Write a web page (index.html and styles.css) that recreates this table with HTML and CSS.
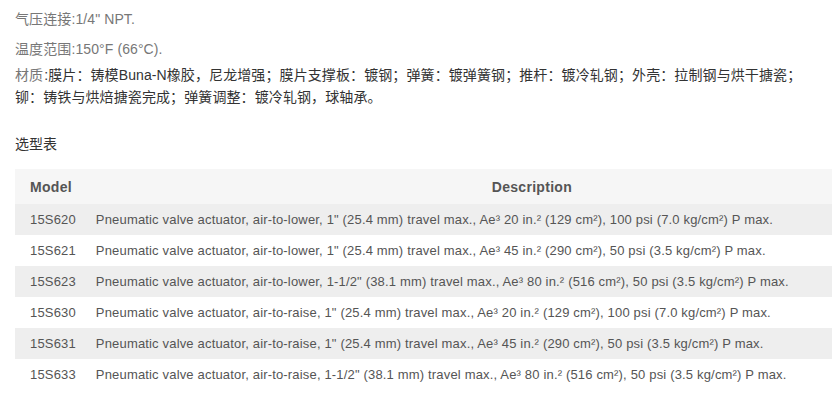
FILE: index.html
```html
<!DOCTYPE html>
<html lang="zh-CN">
<head>
<meta charset="utf-8">
<link rel="stylesheet" href="styles.css">
</head>
<body>
<div class="page">
  <p class="spec spec-first">气压连接:1/4" NPT.</p>
  <p class="spec">温度范围:150°F (66°C).</p>
  <p class="spec spec-material"><span class="label">材质</span><span class="value">:膜片：铸模Buna-N橡胶，尼龙增强；膜片支撑板：镀钢；弹簧：镀弹簧钢；推杆：镀冷轧钢；外壳：拉制钢与烘干搪瓷；铆：铸铁与烘焙搪瓷完成；弹簧调整：镀冷轧钢，球轴承。</span></p>
  <h3 class="section-title">选型表</h3>
  <table class="models">
    <thead>
      <tr><th class="col-model">Model</th><th class="col-desc">Description</th></tr>
    </thead>
    <tbody>
      <tr><td>15S620</td><td>Pneumatic valve actuator, air-to-lower, 1" (25.4 mm) travel max., Ae³ 20 in.² (129 cm²), 100 psi (7.0 kg/cm²) P max.</td></tr>
      <tr><td>15S621</td><td>Pneumatic valve actuator, air-to-lower, 1" (25.4 mm) travel max., Ae³ 45 in.² (290 cm²), 50 psi (3.5 kg/cm²) P max.</td></tr>
      <tr><td>15S623</td><td>Pneumatic valve actuator, air-to-lower, 1-1/2" (38.1 mm) travel max., Ae³ 80 in.² (516 cm²), 50 psi (3.5 kg/cm²) P max.</td></tr>
      <tr><td>15S630</td><td>Pneumatic valve actuator, air-to-raise, 1" (25.4 mm) travel max., Ae³ 20 in.² (129 cm²), 100 psi (7.0 kg/cm²) P max.</td></tr>
      <tr><td>15S631</td><td>Pneumatic valve actuator, air-to-raise, 1" (25.4 mm) travel max., Ae³ 45 in.² (290 cm²), 50 psi (3.5 kg/cm²) P max.</td></tr>
      <tr><td>15S633</td><td>Pneumatic valve actuator, air-to-raise, 1-1/2" (38.1 mm) travel max., Ae³ 80 in.² (516 cm²), 50 psi (3.5 kg/cm²) P max.</td></tr>
    </tbody>
  </table>
</div>
</body>
</html>
```
FILE: styles.css
```css
html, body {
  margin: 0;
  padding: 0;
  background: #ffffff;
}
body {
  font-family: "Liberation Sans", Arial, "Noto Sans CJK SC", sans-serif;
  font-size: 14px;
  color: #333333;
  overflow: hidden;
}
.page {
  padding: 0 0 0 15px;
}
.spec {
  margin: 8px 0 0 0;
  line-height: 22px;
  color: #777777;
  max-width: 790px;
  letter-spacing: 0.1px;
}
.spec-material {
  margin-top: 4px;
}
.spec-material .label {
  margin-right: 1px;
}
.spec-material .value {
  color: #333333;
}
.section-title {
  margin: 25px 0 0 0;
  font-size: 14px;
  font-weight: normal;
  line-height: 22px;
  color: #333333;
}
.models {
  margin-top: 14px;
  width: 817px;
  border-collapse: collapse;
  font-size: 13px;
  color: #555555;
}
.models th {
  height: 35px;
  padding: 0 15px;
  background: #f6f6f6;
  font-weight: bold;
  font-size: 14px;
  letter-spacing: 0.3px;
  color: #555555;
  text-align: left;
}
.models th.col-model {
  width: 45px;
  padding-right: 5px;
}
.models th.col-desc {
  text-align: center;
  padding-left: 166px;
}
.models td {
  height: 31px;
  padding: 0 15px;
  white-space: nowrap;
  letter-spacing: 0.17px;
}
.models td:first-child {
  padding-right: 5px;
}
.models tbody tr:nth-child(odd) td {
  background: #eeeeee;
}
```
